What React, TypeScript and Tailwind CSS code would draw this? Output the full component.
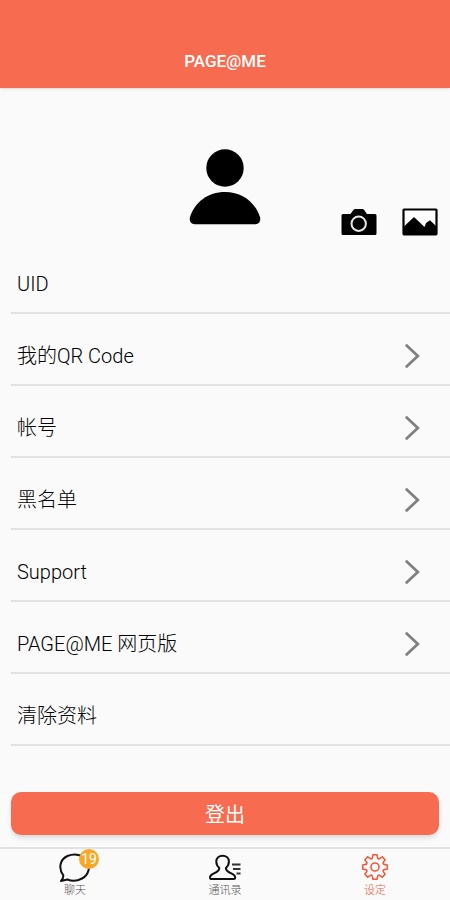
import type { ReactNode } from 'react'

type Row = { label: string; kind: 'text' | 'link' | 'action' }

const ROWS: Row[] = [
  { label: 'UID',           kind: 'text' },
  { label: '我的QR Code',   kind: 'link' },
  { label: '帐号',          kind: 'link' },
  { label: '黑名单',        kind: 'link' },
  { label: 'Support',       kind: 'link' },
  { label: 'PAGE@ME 网页版', kind: 'link' },
  { label: '清除资料',      kind: 'action' },
]

const ROW_CLS = 'flex h-[72px] w-full items-center justify-between border-b-2 border-[#e2e2e2] pl-1.5 pr-[30px] pt-3.5 text-left'

function AvatarIcon() {
  return (
    <svg width="72" height="76" viewBox="0 0 72 76" fill="#000" aria-hidden="true">
      <circle cx="36" cy="19" r="18.7" />
      <path d="M36 43C53 43 66 53 71 68C72 72 70 75.200 66.500 75.200H5.500C2 75.200 0 72 1 68C6 53 19 43 36 43Z" />
    </svg>
  )
}

function CameraIcon() {
  return (
    <svg width="36" height="28" viewBox="0 0 36 28" aria-hidden="true">
      <path d="M2 6H9.500L12.500 1.800Q13.200 1 14.200 1H21.300Q22.300 1 23 1.800L26 6H34Q35.500 6 35.500 7.500V25.500Q35.500 27 34 27H2Q.5 27 .5 25.500V7.500Q.5 6 2 6Z" fill="#000" />
      <circle cx="17.700" cy="15.700" r="7.200" fill="none" stroke="#e8e8e8" strokeWidth="2" />
    </svg>
  )
}

function PictureIcon() {
  return (
    <svg width="36" height="28" viewBox="0 0 36 28" aria-hidden="true">
      <rect x="1.500" y="1.500" width="33" height="24.800" rx=".5" fill="#fff" stroke="#000" strokeWidth="2.200" />
      <path d="M2 18.500L12 9L22.500 19L24 15L28 12.300L34.500 18.500V26H2Z" fill="#000" />
    </svg>
  )
}

function Chevron() {
  return (
    <svg width="16" height="26" viewBox="0 0 16 26" fill="none" stroke="#808080" strokeWidth="2.800" aria-hidden="true">
      <path d="M1.800 1.800L13.800 13L1.800 24.200" />
    </svg>
  )
}

function ChatIcon() {
  return (
    <svg width="32" height="30" viewBox="0 0 32 30" fill="none" stroke="#111" strokeWidth="2" strokeLinejoin="round" aria-hidden="true">
      <path d="M4.300 22.300C-1 15 1 6.500 8.500 3C15.500 .2 24 1.500 28 7.500C32 14 29.500 22 23 25.500C17.500 28.500 12 28 8.500 26.500L2 28Q4.500 25.500 4.300 22.300Z" />
    </svg>
  )
}

function ContactsIcon() {
  return (
    <svg width="32" height="30" viewBox="0 0 32 30" fill="none" stroke="#111" strokeWidth="2" strokeLinejoin="round" aria-hidden="true">
      <path d="M10.300 15C8 13 7.300 10.800 7.300 8.600C7.300 5 10 2.800 13.600 2.800C17.200 2.800 19.900 5 19.900 8.600C19.900 10.800 19.200 13 16.900 15C16.900 17.500 18 18.300 20.500 19.500C24 21 26.200 22 26.200 24.500C26.200 25.700 25.600 26 24.500 26H2.700C1.600 26 1 25.700 1 24.500C1 22 3.200 21 6.700 19.500C9.200 18.300 10.300 17.500 10.300 15Z" />
      <path d="M23 11.500H31.500M24 16H31.500M27.500 20.500H31.500" stroke="#333" />
    </svg>
  )
}

function GearIcon() {
  return (
    <svg width="30" height="30" viewBox="-15 -14 30 30" fill="none" stroke="currentColor" strokeWidth="1.600" strokeLinejoin="round" aria-hidden="true">
      <path d="M-2 -12.300H2L2.600 -9.200A1.300 1.300 0 0 0 4.660 -8.340L7.280 -10.110L10.110 -7.280L8.340 -4.660A1.300 1.300 0 0 0 9.200 -2.600L12.300 -2V2L9.200 2.600A1.300 1.300 0 0 0 8.340 4.660L10.110 7.280L7.280 10.110L4.660 8.340A1.300 1.300 0 0 0 2.600 9.200L2 12.300H-2L-2.600 9.200A1.300 1.300 0 0 0 -4.660 8.340L-7.280 10.110L-10.110 7.280L-8.340 4.660A1.300 1.300 0 0 0 -9.200 2.600L-12.300 2V-2L-9.200 -2.600A1.300 1.300 0 0 0 -8.340 -4.660L-10.110 -7.280L-7.280 -10.110L-4.660 -8.340A1.300 1.300 0 0 0 -2.600 -9.200Z" />
      <circle r="4" />
    </svg>
  )
}

function Tab({ label, icon, badge, active }: { label: string; icon: ReactNode; badge?: number; active?: boolean }) {
  return (
    <a
      href="#"
      aria-current={active ? 'page' : undefined}
      className={`flex flex-1 flex-col items-center pt-1 ${active ? 'text-[#f05a3c]' : 'text-[#555]'}`}
    >
      <span className="relative">
        {icon}
        {badge !== undefined && (
          <span className="absolute -right-2 -top-1 flex size-5 items-center justify-center rounded-full bg-[#f9a825] text-sm leading-5 text-white">
            {badge}
          </span>
        )}
      </span>
      <span className="text-[11px] font-light leading-4">{label}</span>
    </a>
  )
}

export default function App() {
  return (
    <div className="flex min-h-screen flex-col bg-[#fafafa] font-[Roboto,'Noto_Sans_CJK_SC',sans-serif] text-[#1c1c1c]">
      <header className="bg-[#f76b50] pb-[15px] pt-[49px] text-center shadow">
        <h1 className="text-[17px] font-medium leading-6 text-white">PAGE@ME</h1>
      </header>

      <main className="flex-1">
        <section className="relative flex justify-center pb-[17px] pt-[61px]">
          <AvatarIcon />
          <div className="absolute bottom-1.5 right-3 flex gap-[25px]">
            <button type="button" aria-label="拍照"><CameraIcon /></button>
            <button type="button" aria-label="相册"><PictureIcon /></button>
          </div>
        </section>

        <ul className="pl-[11px] text-[20px] font-light leading-7 text-black">
          {ROWS.map(row => (
            <li key={row.label}>
              {row.kind === 'text' ? (
                <div className={ROW_CLS}>{row.label}</div>
              ) : (
                <button type="button" className={ROW_CLS}>
                  {row.label}
                  {row.kind === 'link' && <Chevron />}
                </button>
              )}
            </li>
          ))}
        </ul>
      </main>

      <div className="px-[11px] pb-3">
        <button type="button" className="h-[43px] w-full rounded-[10px] bg-[#f76b50] pt-0.5 text-[20px] leading-7 text-white shadow-md">
          登出
        </button>
      </div>

      <nav className="flex border-t-2 border-[#e2e2e2] pb-px">
        <Tab label="聊天" icon={<ChatIcon />} badge={19} />
        <Tab label="通讯录" icon={<ContactsIcon />} />
        <Tab label="设定" icon={<GearIcon />} active />
      </nav>
    </div>
  )
}
